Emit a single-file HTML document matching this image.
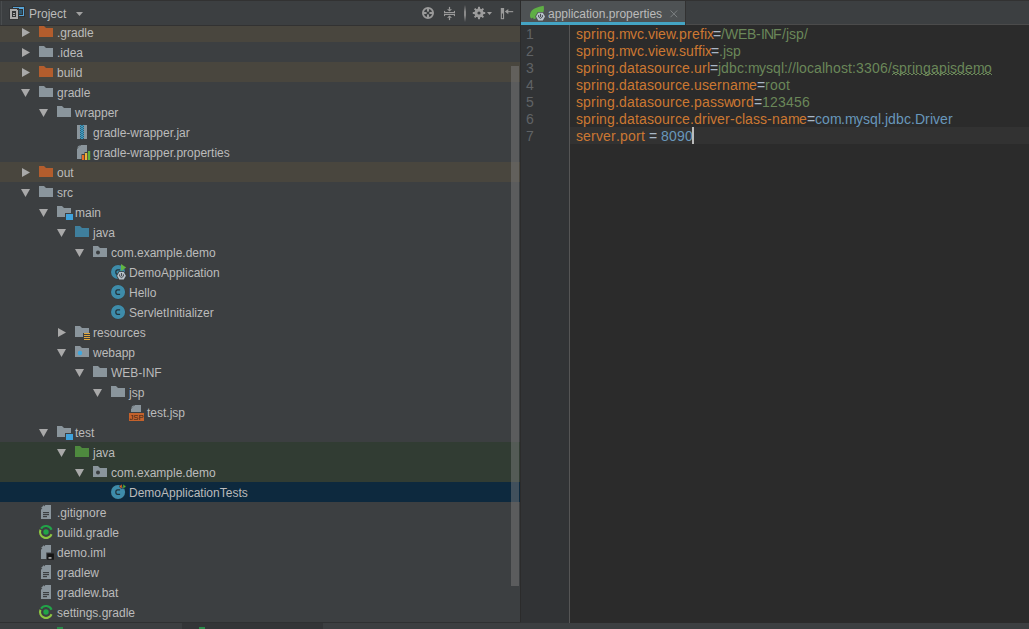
<!DOCTYPE html><html><head><meta charset="utf-8"><style>
html,body{margin:0;padding:0;}
body{width:1029px;height:629px;position:relative;overflow:hidden;background:#3c3f41;font-family:"Liberation Sans",sans-serif;}
.t{position:absolute;height:20px;line-height:20px;font-size:12px;color:#bbbbbb;white-space:pre;}
.ln{position:absolute;left:526px;height:17px;line-height:17px;font-size:14px;color:#606366;}
.cl{position:absolute;left:576px;height:17px;line-height:17px;font-size:14px;white-space:pre;}
.cl i{display:inline-block;font-style:normal;overflow:visible;}
.w1{width:1px}
.w2{width:2px}
.w3{width:3px}
.w4{width:4px}
.w5{width:5px}
.w6{width:6px}
.w7{width:7px}
.w8{width:8px}
.w9{width:9px}
.w10{width:10px}
.w11{width:11px}
.w12{width:12px}
.w13{width:13px}
.w14{width:14px}
.w15{width:15px}
</style></head><body>
<div style="position:absolute;left:0;top:0;width:1029px;height:1px;background:#323232"></div>
<div style="position:absolute;left:0;top:22px;width:520px;height:600px;overflow:hidden;background:#3c3f41">
<div style="position:absolute;left:0;top:-22px;width:520px;height:629px"><div style="position:absolute;left:0;top:22px;width:520px;height:20px;background:#49463e"></div><svg style="position:absolute;left:22px;top:28px;overflow:visible" width="9" height="10" viewBox="0 0 9 10"><path d="M0 0L8 4.5L0 9Z" fill="#a9a9a9"/></svg><svg style="position:absolute;left:39px;top:26px;overflow:visible" width="14" height="12" viewBox="0 0 14 12"><path d="M0 0H5L7 2H14V11H0Z" fill="#b35d2d"/></svg><div class="t" style="left:57px;top:23px">.gradle</div><svg style="position:absolute;left:22px;top:48px;overflow:visible" width="9" height="10" viewBox="0 0 9 10"><path d="M0 0L8 4.5L0 9Z" fill="#a9a9a9"/></svg><svg style="position:absolute;left:39px;top:46px;overflow:visible" width="14" height="12" viewBox="0 0 14 12"><path d="M0 0H5L7 2H14V11H0Z" fill="#8a959c"/></svg><div class="t" style="left:57px;top:43px">.idea</div><div style="position:absolute;left:0;top:62px;width:520px;height:20px;background:#49463e"></div><svg style="position:absolute;left:22px;top:68px;overflow:visible" width="9" height="10" viewBox="0 0 9 10"><path d="M0 0L8 4.5L0 9Z" fill="#a9a9a9"/></svg><svg style="position:absolute;left:39px;top:66px;overflow:visible" width="14" height="12" viewBox="0 0 14 12"><path d="M0 0H5L7 2H14V11H0Z" fill="#b35d2d"/></svg><div class="t" style="left:57px;top:63px">build</div><svg style="position:absolute;left:21px;top:89px;overflow:visible" width="10" height="9" viewBox="0 0 10 9"><path d="M0 0H9L4.5 8Z" fill="#a9a9a9"/></svg><svg style="position:absolute;left:39px;top:86px;overflow:visible" width="14" height="12" viewBox="0 0 14 12"><path d="M0 0H5L7 2H14V11H0Z" fill="#8a959c"/></svg><div class="t" style="left:57px;top:83px">gradle</div><svg style="position:absolute;left:39px;top:109px;overflow:visible" width="10" height="9" viewBox="0 0 10 9"><path d="M0 0H9L4.5 8Z" fill="#a9a9a9"/></svg><svg style="position:absolute;left:57px;top:106px;overflow:visible" width="14" height="12" viewBox="0 0 14 12"><path d="M0 0H5L7 2H14V11H0Z" fill="#8a959c"/></svg><div class="t" style="left:75px;top:103px">wrapper</div><svg style="position:absolute;left:77px;top:125px;overflow:visible" width="10" height="14" viewBox="0 0 10 14"><rect x="0" y="0" width="3" height="14" fill="#8a959c"/><rect x="7" y="0" width="3" height="14" fill="#8a959c"/><path d="M3.2 0.3L5 1.6L6.8 0.3" stroke="#3aaee0" stroke-width="1.1" fill="none"/><path d="M3.2 2.3L5 3.6L6.8 2.3" stroke="#3aaee0" stroke-width="1.1" fill="none"/><path d="M3.2 4.3L5 5.6L6.8 4.3" stroke="#3aaee0" stroke-width="1.1" fill="none"/><path d="M3.2 6.3L5 7.6L6.8 6.3" stroke="#3aaee0" stroke-width="1.1" fill="none"/><path d="M3.2 8.3L5 9.6L6.8 8.3" stroke="#3aaee0" stroke-width="1.1" fill="none"/><path d="M3.2 10.3L5 11.6L6.8 10.3" stroke="#3aaee0" stroke-width="1.1" fill="none"/><path d="M3.2 12.3L5 13.6L6.8 12.3" stroke="#3aaee0" stroke-width="1.1" fill="none"/></svg><div class="t" style="left:93px;top:123px">gradle-wrapper.jar</div><svg style="position:absolute;left:77px;top:145px;overflow:visible" width="14" height="15" viewBox="0 0 14 15"><path d="M0 2.6L2.6 0V2.6Z" fill="#8a959c"/><path d="M4 0H10V7H7.5V9H4.5V14H0V4Z" fill="#8a959c"/><rect x="5" y="10" width="2.2" height="5" fill="#e96a22"/><rect x="8" y="8" width="2.2" height="7" fill="#eab43a"/><rect x="11" y="6" width="2.2" height="9" fill="#5fb23d"/></svg><div class="t" style="left:93px;top:143px">gradle-wrapper.properties</div><div style="position:absolute;left:0;top:162px;width:520px;height:20px;background:#49463e"></div><svg style="position:absolute;left:22px;top:168px;overflow:visible" width="9" height="10" viewBox="0 0 9 10"><path d="M0 0L8 4.5L0 9Z" fill="#a9a9a9"/></svg><svg style="position:absolute;left:39px;top:166px;overflow:visible" width="14" height="12" viewBox="0 0 14 12"><path d="M0 0H5L7 2H14V11H0Z" fill="#b35d2d"/></svg><div class="t" style="left:57px;top:163px">out</div><svg style="position:absolute;left:21px;top:189px;overflow:visible" width="10" height="9" viewBox="0 0 10 9"><path d="M0 0H9L4.5 8Z" fill="#a9a9a9"/></svg><svg style="position:absolute;left:39px;top:186px;overflow:visible" width="14" height="12" viewBox="0 0 14 12"><path d="M0 0H5L7 2H14V11H0Z" fill="#8a959c"/></svg><div class="t" style="left:57px;top:183px">src</div><svg style="position:absolute;left:39px;top:209px;overflow:visible" width="10" height="9" viewBox="0 0 10 9"><path d="M0 0H9L4.5 8Z" fill="#a9a9a9"/></svg><svg style="position:absolute;left:57px;top:206px;overflow:visible" width="16" height="15" viewBox="0 0 16 15"><path d="M0 0H5L7 2H14V7H8V11H0Z" fill="#8a959c"/><rect x="9" y="8" width="7" height="6" fill="#3fa2dc"/></svg><div class="t" style="left:75px;top:203px">main</div><svg style="position:absolute;left:57px;top:229px;overflow:visible" width="10" height="9" viewBox="0 0 10 9"><path d="M0 0H9L4.5 8Z" fill="#a9a9a9"/></svg><svg style="position:absolute;left:75px;top:226px;overflow:visible" width="14" height="12" viewBox="0 0 14 12"><path d="M0 0H5L7 2H14V11H0Z" fill="#3f7f9d"/></svg><div class="t" style="left:93px;top:223px">java</div><svg style="position:absolute;left:75px;top:249px;overflow:visible" width="10" height="9" viewBox="0 0 10 9"><path d="M0 0H9L4.5 8Z" fill="#a9a9a9"/></svg><svg style="position:absolute;left:93px;top:246px;overflow:visible" width="14" height="12" viewBox="0 0 14 12"><path d="M0 0H5L7 2H14V11H0Z" fill="#8a959c"/><circle cx="5" cy="6.5" r="2" fill="#3a3d3f"/></svg><div class="t" style="left:111px;top:243px">com.example.demo</div><svg style="position:absolute;left:111px;top:265px;overflow:visible" width="17" height="17" viewBox="0 0 17 17"><circle cx="7.05" cy="7.05" r="7.4" fill="#2f3234" opacity="0.6"/><circle cx="7.05" cy="7.05" r="7.05" fill="#3e8caa"/><path d="M9.1 4.8H6.6C5.3 4.8 4.8 5.8 4.8 7.1C4.8 8.4 5.3 9.4 6.6 9.4H9.1" stroke="#22333b" stroke-width="1.25" fill="none"/><path d="M10 -1L15.2 2.5L10 6Z" fill="#62b543"/><polygon points="15.80,10.80 13.15,15.39 7.85,15.39 5.20,10.80 7.85,6.21 13.15,6.21" fill="#3c3f41"/><polygon points="14.90,10.80 12.70,14.61 8.30,14.61 6.10,10.80 8.30,6.99 12.70,6.99" fill="#b9c2ca"/><path d="M8.60 9.30V11.20Q10.50 14.00 12.40 11.20V9.30" stroke="#4a4f53" stroke-width="1" fill="none"/><rect x="9.95" y="8.00" width="1.1" height="3.2" fill="#4a4f53"/></svg><div class="t" style="left:129px;top:263px">DemoApplication</div><svg style="position:absolute;left:111px;top:285px;overflow:visible" width="15" height="15" viewBox="0 0 15 15"><circle cx="7.05" cy="7.05" r="7.4" fill="#2f3234" opacity="0.6"/><circle cx="7.05" cy="7.05" r="7.05" fill="#3e8caa"/><path d="M9.1 4.8H6.6C5.3 4.8 4.8 5.8 4.8 7.1C4.8 8.4 5.3 9.4 6.6 9.4H9.1" stroke="#22333b" stroke-width="1.25" fill="none"/></svg><div class="t" style="left:129px;top:283px">Hello</div><svg style="position:absolute;left:111px;top:305px;overflow:visible" width="15" height="15" viewBox="0 0 15 15"><circle cx="7.05" cy="7.05" r="7.4" fill="#2f3234" opacity="0.6"/><circle cx="7.05" cy="7.05" r="7.05" fill="#3e8caa"/><path d="M9.1 4.8H6.6C5.3 4.8 4.8 5.8 4.8 7.1C4.8 8.4 5.3 9.4 6.6 9.4H9.1" stroke="#22333b" stroke-width="1.25" fill="none"/></svg><div class="t" style="left:129px;top:303px">ServletInitializer</div><svg style="position:absolute;left:58px;top:328px;overflow:visible" width="9" height="10" viewBox="0 0 9 10"><path d="M0 0L8 4.5L0 9Z" fill="#a9a9a9"/></svg><svg style="position:absolute;left:75px;top:326px;overflow:visible" width="16" height="16" viewBox="0 0 16 16"><path d="M0 0H5L7 2H14V7H8V11H0Z" fill="#8a959c"/><rect x="9" y="7" width="6" height="1" fill="#e0a73c"/><rect x="9" y="9" width="6" height="1" fill="#e0a73c"/><rect x="9" y="11" width="6" height="1" fill="#e0a73c"/><rect x="9" y="13" width="6" height="1" fill="#e0a73c"/></svg><div class="t" style="left:93px;top:323px">resources</div><svg style="position:absolute;left:57px;top:349px;overflow:visible" width="10" height="9" viewBox="0 0 10 9"><path d="M0 0H9L4.5 8Z" fill="#a9a9a9"/></svg><svg style="position:absolute;left:75px;top:346px;overflow:visible" width="14" height="12" viewBox="0 0 14 12"><path d="M0 0H5L7 2H14V11H0Z" fill="#8a959c"/><circle cx="5" cy="7" r="2.2" fill="#3fa8e0"/></svg><div class="t" style="left:93px;top:343px">webapp</div><svg style="position:absolute;left:75px;top:369px;overflow:visible" width="10" height="9" viewBox="0 0 10 9"><path d="M0 0H9L4.5 8Z" fill="#a9a9a9"/></svg><svg style="position:absolute;left:93px;top:366px;overflow:visible" width="14" height="12" viewBox="0 0 14 12"><path d="M0 0H5L7 2H14V11H0Z" fill="#8a959c"/></svg><div class="t" style="left:111px;top:363px">WEB-INF</div><svg style="position:absolute;left:93px;top:389px;overflow:visible" width="10" height="9" viewBox="0 0 10 9"><path d="M0 0H9L4.5 8Z" fill="#a9a9a9"/></svg><svg style="position:absolute;left:111px;top:386px;overflow:visible" width="14" height="12" viewBox="0 0 14 12"><path d="M0 0H5L7 2H14V11H0Z" fill="#8a959c"/></svg><div class="t" style="left:129px;top:383px">jsp</div><svg style="position:absolute;left:129px;top:405px;overflow:visible" width="16" height="16" viewBox="0 0 16 16"><path d="M2 2.6L4.6 0V2.6Z" fill="#8a959c"/><path d="M6 0H12V7H2V4Z" fill="#8a959c"/><rect x="0" y="8" width="15" height="8" fill="#c4622c"/><text x="7.5" y="15" font-family="Liberation Sans" font-size="7.6" text-anchor="middle" fill="#3a2418">JSP</text></svg><div class="t" style="left:147px;top:403px">test.jsp</div><svg style="position:absolute;left:39px;top:429px;overflow:visible" width="10" height="9" viewBox="0 0 10 9"><path d="M0 0H9L4.5 8Z" fill="#a9a9a9"/></svg><svg style="position:absolute;left:57px;top:426px;overflow:visible" width="16" height="15" viewBox="0 0 16 15"><path d="M0 0H5L7 2H14V7H8V11H0Z" fill="#8a959c"/><rect x="9" y="8" width="7" height="6" fill="#3fa2dc"/></svg><div class="t" style="left:75px;top:423px">test</div><div style="position:absolute;left:0;top:442px;width:520px;height:20px;background:#313c33"></div><svg style="position:absolute;left:57px;top:449px;overflow:visible" width="10" height="9" viewBox="0 0 10 9"><path d="M0 0H9L4.5 8Z" fill="#a9a9a9"/></svg><svg style="position:absolute;left:75px;top:446px;overflow:visible" width="14" height="12" viewBox="0 0 14 12"><path d="M0 0H5L7 2H14V11H0Z" fill="#4e8a3e"/></svg><div class="t" style="left:93px;top:443px">java</div><div style="position:absolute;left:0;top:462px;width:520px;height:20px;background:#313c33"></div><svg style="position:absolute;left:75px;top:469px;overflow:visible" width="10" height="9" viewBox="0 0 10 9"><path d="M0 0H9L4.5 8Z" fill="#a9a9a9"/></svg><svg style="position:absolute;left:93px;top:466px;overflow:visible" width="14" height="12" viewBox="0 0 14 12"><path d="M0 0H5L7 2H14V11H0Z" fill="#8a959c"/><circle cx="5" cy="6.5" r="2" fill="#3a3d3f"/></svg><div class="t" style="left:111px;top:463px">com.example.demo</div><div style="position:absolute;left:0;top:482px;width:520px;height:20px;background:#0d293e"></div><svg style="position:absolute;left:111px;top:485px;overflow:visible" width="17" height="15" viewBox="0 0 17 15"><circle cx="7.05" cy="7.05" r="7.4" fill="#2f3234" opacity="0.6"/><circle cx="7.05" cy="7.05" r="7.05" fill="#3e8caa"/><path d="M9.1 4.8H6.6C5.3 4.8 4.8 5.8 4.8 7.1C4.8 8.4 5.3 9.4 6.6 9.4H9.1" stroke="#22333b" stroke-width="1.25" fill="none"/><path d="M11 -1V4L8 1.5Z" fill="#e5661f" stroke="#0d293e" stroke-width="0.5"/><path d="M12 -1L15.2 1.5L12 4Z" fill="#5db233" stroke="#0d293e" stroke-width="0.5"/></svg><div class="t" style="left:129px;top:483px">DemoApplicationTests</div><svg style="position:absolute;left:41px;top:505px;overflow:visible" width="10" height="14" viewBox="0 0 10 14"><path d="M0 3L3 0V3Z" fill="#8a959c"/><path d="M4.4 0H10V14H0V4.4Z" fill="#8a959c"/><rect x="2" y="7" width="6" height="1.2" fill="#3c3f41"/><rect x="2" y="9" width="6" height="1.2" fill="#3c3f41"/><rect x="2" y="11" width="4" height="1.2" fill="#3c3f41"/></svg><div class="t" style="left:57px;top:503px">.gitignore</div><svg style="position:absolute;left:39px;top:525px;overflow:visible" width="14" height="14" viewBox="0 0 14 14"><path d="M12.563 9.248A6 6 0 0 1 1.437 4.752" stroke="#8cc641" stroke-width="2.1" fill="none"/><path d="M2.026 3.645A6 6 0 0 1 12.563 4.752" stroke="#21a448" stroke-width="2.1" fill="none"/><circle cx="7" cy="7" r="2.7" fill="#21a448"/></svg><div class="t" style="left:57px;top:523px">build.gradle</div><svg style="position:absolute;left:41px;top:545px;overflow:visible" width="14" height="16" viewBox="0 0 14 16"><path d="M0 3L3 0V3Z" fill="#8a959c"/><path d="M4.4 0H10V14H0V4.4Z" fill="#8a959c"/><rect x="5.2" y="7.5" width="8.7" height="8.2" fill="#3c3f41"/><rect x="6.2" y="8.5" width="6.7" height="6.2" fill="#141414"/><rect x="7.5" y="12.3" width="3" height="1.3" fill="#d8d8d8"/></svg><div class="t" style="left:57px;top:543px">demo.iml</div><svg style="position:absolute;left:41px;top:565px;overflow:visible" width="10" height="14" viewBox="0 0 10 14"><path d="M0 3L3 0V3Z" fill="#8a959c"/><path d="M4.4 0H10V14H0V4.4Z" fill="#8a959c"/><rect x="2" y="7" width="6" height="1.2" fill="#3c3f41"/><rect x="2" y="9" width="6" height="1.2" fill="#3c3f41"/><rect x="2" y="11" width="4" height="1.2" fill="#3c3f41"/></svg><div class="t" style="left:57px;top:563px">gradlew</div><svg style="position:absolute;left:41px;top:585px;overflow:visible" width="10" height="14" viewBox="0 0 10 14"><path d="M0 3L3 0V3Z" fill="#8a959c"/><path d="M4.4 0H10V14H0V4.4Z" fill="#8a959c"/><rect x="2" y="7" width="6" height="1.2" fill="#3c3f41"/><rect x="2" y="9" width="6" height="1.2" fill="#3c3f41"/><rect x="2" y="11" width="4" height="1.2" fill="#3c3f41"/></svg><div class="t" style="left:57px;top:583px">gradlew.bat</div><svg style="position:absolute;left:39px;top:605px;overflow:visible" width="14" height="14" viewBox="0 0 14 14"><path d="M12.563 9.248A6 6 0 0 1 1.437 4.752" stroke="#8cc641" stroke-width="2.1" fill="none"/><path d="M2.026 3.645A6 6 0 0 1 12.563 4.752" stroke="#21a448" stroke-width="2.1" fill="none"/><circle cx="7" cy="7" r="2.7" fill="#21a448"/></svg><div class="t" style="left:57px;top:603px">settings.gradle</div></div>
</div>
<div style="position:absolute;left:0;top:1px;width:520px;height:24px;background:#3c3f41"></div>
<div style="position:absolute;left:1px;top:1px;width:1px;height:24px;background:#4a4d4f"></div>
<div style="position:absolute;left:0;top:25px;width:520px;height:1px;background:#323232"></div>
<svg style="position:absolute;left:0;top:0" width="30" height="25" shape-rendering="crispEdges"><rect x="12" y="6" width="13" height="11" fill="#2f3133"/><rect x="13" y="7" width="11" height="9" fill="#56a3d6"/><rect x="14" y="9" width="9" height="6" fill="#2f3234"/><rect x="15" y="10" width="7" height="4" fill="#2f5a73"/><rect x="9" y="8" width="10" height="12" fill="#333537"/><path d="M10 9H16L18 11V19H10Z" fill="#ababab"/><rect x="12" y="11" width="4" height="6" fill="#333537"/><rect x="13" y="13" width="2" height="1" fill="#ababab"/><rect x="13" y="15" width="2" height="1" fill="#ababab"/></svg>
<div class="t" style="left:29px;top:4px">Project</div>
<svg style="position:absolute;left:76px;top:12px;overflow:visible" width="8" height="5" viewBox="0 0 8 5"><path d="M0 0H7L3.5 4Z" fill="#a0a0a0"/></svg>
<svg style="position:absolute;left:422px;top:7px;overflow:visible" width="12" height="12" viewBox="0 0 12 12"><circle cx="6" cy="6" r="5" fill="none" stroke="#9a9a9a" stroke-width="2"/><g fill="#9a9a9a"><rect x="5" y="2" width="2" height="2.6"/><rect x="5" y="7.4" width="2" height="2.6"/><rect x="2" y="5" width="2.6" height="2"/><rect x="7.4" y="5" width="2.6" height="2"/></g></svg>
<svg style="position:absolute;left:443px;top:6px;overflow:visible" width="13" height="15" viewBox="0 0 13 15"><g fill="#9a9a9a"><rect x="1" y="6" width="11" height="1.1"/><rect x="1" y="4.9" width="1.1" height="2.2"/><rect x="10.9" y="4.9" width="1.1" height="2.2"/><rect x="1" y="7.9" width="11" height="1.1"/><rect x="1" y="7.9" width="1.1" height="2.2"/><rect x="10.9" y="7.9" width="1.1" height="2.2"/><rect x="5.9" y="0.9" width="1.2" height="2.6"/><path d="M4 3.2H9L6.5 5.6Z"/><rect x="5.9" y="11.5" width="1.2" height="2.6"/><path d="M4 11.8H9L6.5 9.4Z"/></g></svg>
<div style="position:absolute;left:464px;top:5px;width:2px;height:17px;background:linear-gradient(#3c3f41,#8a8a8a 40%,#8a8a8a 60%,#3c3f41)"></div>
<svg style="position:absolute;left:472px;top:6px;overflow:visible" width="14" height="14" viewBox="0 0 14 14"><g fill="#9c9c9c"><circle cx="7" cy="7" r="4.6"/><rect x="6" y="0.8" width="2" height="12.4"/><rect x="0.8" y="6" width="12.4" height="2"/><rect x="6" y="0.8" width="2" height="12.4" transform="rotate(45 7 7)"/><rect x="6" y="0.8" width="2" height="12.4" transform="rotate(-45 7 7)"/></g><circle cx="7" cy="7" r="1.6" fill="#3c3f41"/></svg>
<svg style="position:absolute;left:487px;top:12px;overflow:visible" width="6" height="4" viewBox="0 0 6 4"><path d="M0 0H5L2.5 3Z" fill="#9c9c9c"/></svg>
<svg style="position:absolute;left:500px;top:7px;overflow:visible" width="15" height="13" viewBox="0 0 15 13"><rect x="0.8" y="1" width="3.3" height="11.2" fill="#9a9a9a"/><rect x="1.9" y="6.5" width="1.1" height="4.6" fill="#3c3f41"/><path d="M4.8 4.6L8.3 1.9V7.3Z" fill="#9a9a9a"/><rect x="8" y="4.1" width="5.2" height="1.1" fill="#9a9a9a"/></svg>
<div style="position:absolute;left:511px;top:66px;width:8px;height:520px;background:rgba(128,128,128,0.45)"></div>
<div style="position:absolute;left:520px;top:0;width:1px;height:623px;background:#2b2b2b"></div>
<div style="position:absolute;left:521px;top:1px;width:508px;height:24px;background:#3c3f41"></div>
<div style="position:absolute;left:686px;top:24px;width:343px;height:1px;background:#4b4b4b"></div>
<div style="position:absolute;left:521px;top:1px;width:164px;height:21px;background:#4e5254"></div>
<div style="position:absolute;left:685px;top:1px;width:1px;height:24px;background:#323232"></div>
<div style="position:absolute;left:521px;top:22px;width:164px;height:3px;background:#44a4c4"></div>
<svg style="position:absolute;left:526px;top:3px;overflow:visible" width="22" height="19" viewBox="0 0 22 19"><path d="M17.6 2.8C12 4 5.2 5.5 4.1 11.2C3.8 13.2 4.3 14.6 5.2 15.6L7.2 14.6L7.6 16.2L9.6 15.4C13.5 14.3 16.8 12 17.6 8.6C18.1 6.6 18 4.5 17.6 2.8Z" fill="#5fae45"/><polygon points="19.90,13.60 17.20,18.28 11.80,18.28 9.10,13.60 11.80,8.92 17.20,8.92" fill="#4e5254"/><polygon points="19.00,13.60 16.75,17.50 12.25,17.50 10.00,13.60 12.25,9.70 16.75,9.70" fill="#b9c2ca"/><path d="M12.60 12.10V14.00Q14.50 16.80 16.40 14.00V12.10" stroke="#4a4f53" stroke-width="1" fill="none"/><rect x="13.95" y="10.80" width="1.1" height="3.2" fill="#4a4f53"/></svg>
<div class="t" style="left:548px;top:4px">application.properties</div>
<svg style="position:absolute;left:670px;top:10px;overflow:visible" width="8" height="8" viewBox="0 0 8 8"><path d="M0.5 0.5L7.2 7.2M7.2 0.5L0.5 7.2" stroke="#7c8082" stroke-width="1"/></svg>
<div style="position:absolute;left:521px;top:25px;width:48px;height:598px;background:#313335"></div>
<div style="position:absolute;left:569px;top:25px;width:1px;height:598px;background:#555555"></div>
<div style="position:absolute;left:570px;top:25px;width:459px;height:598px;background:#2b2b2b"></div>
<div style="position:absolute;left:570px;top:127px;width:459px;height:17px;background:#323232"></div>
<div class="ln" style="top:26px">1</div>
<div class="cl" style="top:26px"><span style="color:#cc7832"><i class="w7">s</i><i class="w8">p</i><i class="w5">r</i><i class="w3">i</i><i class="w8">n</i><i class="w8">g</i><i class="w4">.</i><i class="w11">m</i><i class="w7">v</i><i class="w7">c</i><i class="w4">.</i><i class="w7">v</i><i class="w3">i</i><i class="w8">e</i><i class="w9">w</i><i class="w4">.</i><i class="w8">p</i><i class="w5">r</i><i class="w8">e</i><i class="w4">f</i><i class="w3">i</i><i class="w6">x</i></span><span style="color:#a9b7c6"><i class="w8">=</i></span><span style="color:#6a8759"><i class="w4">/</i><i class="w13">W</i><i class="w9">E</i><i class="w9">B</i><i class="w5">-</i><i class="w3">I</i><i class="w9">N</i><i class="w9">F</i><i class="w4">/</i><i class="w3">j</i><i class="w7">s</i><i class="w8">p</i><i class="w4">/</i></span></div>
<div class="ln" style="top:43px">2</div>
<div class="cl" style="top:43px"><span style="color:#cc7832"><i class="w7">s</i><i class="w8">p</i><i class="w5">r</i><i class="w3">i</i><i class="w8">n</i><i class="w8">g</i><i class="w4">.</i><i class="w11">m</i><i class="w7">v</i><i class="w7">c</i><i class="w4">.</i><i class="w7">v</i><i class="w3">i</i><i class="w8">e</i><i class="w9">w</i><i class="w4">.</i><i class="w7">s</i><i class="w8">u</i><i class="w4">f</i><i class="w4">f</i><i class="w3">i</i><i class="w6">x</i></span><span style="color:#a9b7c6"><i class="w8">=</i></span><span style="color:#6a8759"><i class="w4">.</i><i class="w3">j</i><i class="w7">s</i><i class="w8">p</i></span></div>
<div class="ln" style="top:60px">3</div>
<div class="cl" style="top:60px"><span style="color:#cc7832"><i class="w7">s</i><i class="w8">p</i><i class="w5">r</i><i class="w3">i</i><i class="w8">n</i><i class="w8">g</i><i class="w4">.</i><i class="w8">d</i><i class="w8">a</i><i class="w4">t</i><i class="w8">a</i><i class="w7">s</i><i class="w8">o</i><i class="w8">u</i><i class="w5">r</i><i class="w7">c</i><i class="w8">e</i><i class="w4">.</i><i class="w8">u</i><i class="w5">r</i><i class="w3">l</i></span><span style="color:#a9b7c6"><i class="w8">=</i></span><span style="color:#6a8759"><i class="w3">j</i><i class="w8">d</i><i class="w8">b</i><i class="w7">c</i><i class="w4">:</i><i class="w11">m</i><i class="w7">y</i><i class="w7">s</i><i class="w8">q</i><i class="w3">l</i><i class="w4">:</i><i class="w4">/</i><i class="w4">/</i><i class="w3">l</i><i class="w8">o</i><i class="w7">c</i><i class="w8">a</i><i class="w3">l</i><i class="w8">h</i><i class="w8">o</i><i class="w7">s</i><i class="w4">t</i><i class="w4">:</i><i class="w8">3</i><i class="w8">3</i><i class="w8">0</i><i class="w8">6</i><i class="w4">/</i></span><span style="color:#6a8759"><i class="w7">s</i><i class="w8">p</i><i class="w5">r</i><i class="w3">i</i><i class="w8">n</i><i class="w8">g</i><i class="w8">a</i><i class="w8">p</i><i class="w3">i</i><i class="w7">s</i><i class="w8">d</i><i class="w8">e</i><i class="w11">m</i><i class="w8">o</i></span></div>
<div class="ln" style="top:77px">4</div>
<div class="cl" style="top:77px"><span style="color:#cc7832"><i class="w7">s</i><i class="w8">p</i><i class="w5">r</i><i class="w3">i</i><i class="w8">n</i><i class="w8">g</i><i class="w4">.</i><i class="w8">d</i><i class="w8">a</i><i class="w4">t</i><i class="w8">a</i><i class="w7">s</i><i class="w8">o</i><i class="w8">u</i><i class="w5">r</i><i class="w7">c</i><i class="w8">e</i><i class="w4">.</i><i class="w8">u</i><i class="w7">s</i><i class="w8">e</i><i class="w5">r</i><i class="w8">n</i><i class="w8">a</i><i class="w11">m</i><i class="w8">e</i></span><span style="color:#a9b7c6"><i class="w8">=</i></span><span style="color:#6a8759"><i class="w5">r</i><i class="w8">o</i><i class="w8">o</i><i class="w4">t</i></span></div>
<div class="ln" style="top:94px">5</div>
<div class="cl" style="top:94px"><span style="color:#cc7832"><i class="w7">s</i><i class="w8">p</i><i class="w5">r</i><i class="w3">i</i><i class="w8">n</i><i class="w8">g</i><i class="w4">.</i><i class="w8">d</i><i class="w8">a</i><i class="w4">t</i><i class="w8">a</i><i class="w7">s</i><i class="w8">o</i><i class="w8">u</i><i class="w5">r</i><i class="w7">c</i><i class="w8">e</i><i class="w4">.</i><i class="w8">p</i><i class="w8">a</i><i class="w7">s</i><i class="w7">s</i><i class="w9">w</i><i class="w8">o</i><i class="w5">r</i><i class="w8">d</i></span><span style="color:#a9b7c6"><i class="w8">=</i></span><span style="color:#6a8759"><i class="w8">1</i><i class="w8">2</i><i class="w8">3</i><i class="w8">4</i><i class="w8">5</i><i class="w8">6</i></span></div>
<div class="ln" style="top:111px">6</div>
<div class="cl" style="top:111px"><span style="color:#cc7832"><i class="w7">s</i><i class="w8">p</i><i class="w5">r</i><i class="w3">i</i><i class="w8">n</i><i class="w8">g</i><i class="w4">.</i><i class="w8">d</i><i class="w8">a</i><i class="w4">t</i><i class="w8">a</i><i class="w7">s</i><i class="w8">o</i><i class="w8">u</i><i class="w5">r</i><i class="w7">c</i><i class="w8">e</i><i class="w4">.</i><i class="w8">d</i><i class="w5">r</i><i class="w3">i</i><i class="w7">v</i><i class="w8">e</i><i class="w5">r</i><i class="w5">-</i><i class="w7">c</i><i class="w3">l</i><i class="w8">a</i><i class="w7">s</i><i class="w7">s</i><i class="w5">-</i><i class="w8">n</i><i class="w8">a</i><i class="w11">m</i><i class="w8">e</i></span><span style="color:#a9b7c6"><i class="w8">=</i></span><span style="color:#6897bb"><i class="w7">c</i><i class="w8">o</i><i class="w11">m</i><i class="w4">.</i><i class="w11">m</i><i class="w7">y</i><i class="w7">s</i><i class="w8">q</i><i class="w3">l</i><i class="w4">.</i><i class="w3">j</i><i class="w8">d</i><i class="w8">b</i><i class="w7">c</i><i class="w4">.</i><i class="w10">D</i><i class="w5">r</i><i class="w3">i</i><i class="w7">v</i><i class="w8">e</i><i class="w5">r</i></span></div>
<div class="ln" style="top:128px">7</div>
<div class="cl" style="top:128px"><span style="color:#cc7832"><i class="w7">s</i><i class="w8">e</i><i class="w5">r</i><i class="w7">v</i><i class="w8">e</i><i class="w5">r</i><i class="w4">.</i><i class="w8">p</i><i class="w8">o</i><i class="w5">r</i><i class="w4">t</i></span><span style="color:#a9b7c6"><i class="w4">&nbsp;</i><i class="w8">=</i><i class="w4">&nbsp;</i></span><span style="color:#6897bb"><i class="w8">8</i><i class="w8">0</i><i class="w8">9</i><i class="w8">0</i></span></div>
<svg style="position:absolute;left:892px;top:72px" width="101" height="4"><polyline points="0,3 2,1 4,3 6,1 8,3 10,1 12,3 14,1 16,3 18,1 20,3 22,1 24,3 26,1 28,3 30,1 32,3 34,1 36,3 38,1 40,3 42,1 44,3 46,1 48,3 50,1 52,3 54,1 56,3 58,1 60,3 62,1 64,3 66,1 68,3 70,1 72,3 74,1 76,3 78,1 80,3 82,1 84,3 86,1 88,3 90,1 92,3 94,1 96,3 98,1 100,3" fill="none" stroke="#6a8759" stroke-width="1"/></svg>
<div style="position:absolute;left:692px;top:127px;width:2px;height:17px;background:#bbbbbb"></div>
<div style="position:absolute;left:0;top:622px;width:521px;height:1px;background:#2f3132"></div>
<div style="position:absolute;left:0;top:623px;width:1029px;height:6px;background:#3c3f41"></div>
<div style="position:absolute;left:0;top:622px;width:520px;height:1px;background:#2f3132"></div>
<div style="position:absolute;left:182px;top:623px;width:141px;height:6px;background:#333537"></div>
<div style="position:absolute;left:57px;top:627px;width:6px;height:2px;background:#2b8a4a"></div>
<div style="position:absolute;left:199px;top:627px;width:6px;height:2px;background:#2b8a4a"></div>
</body></html>
